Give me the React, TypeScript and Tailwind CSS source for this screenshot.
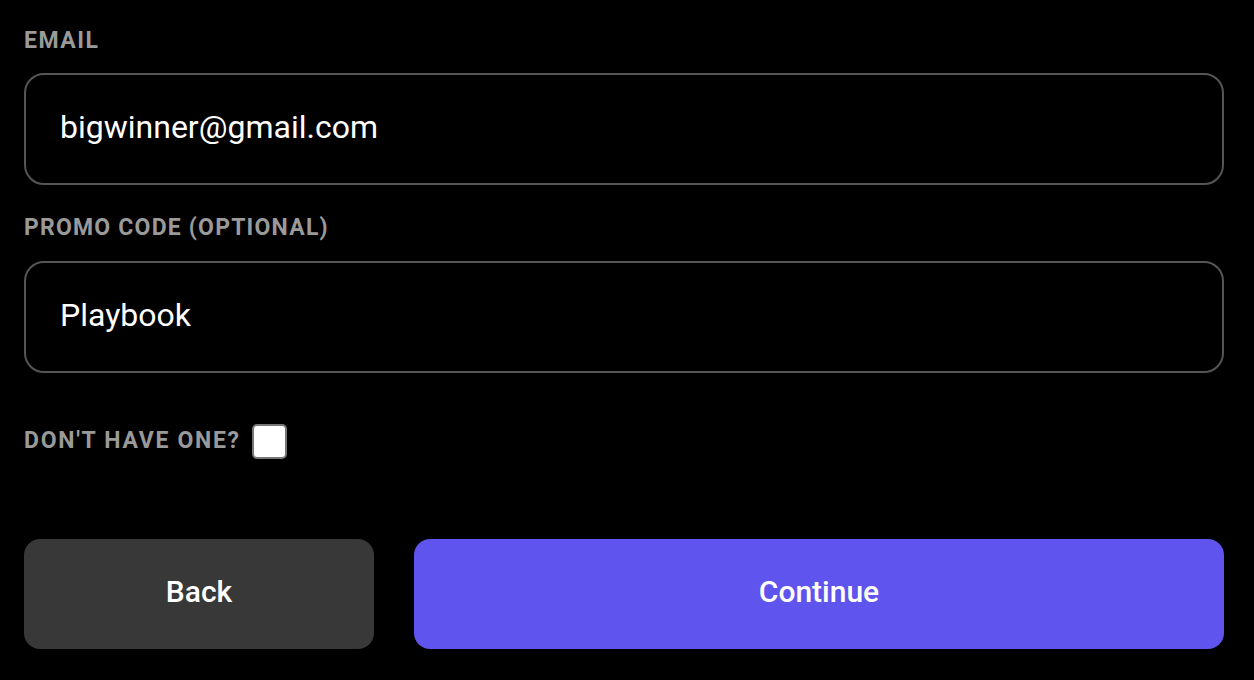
import React from "react";

export default function App() {
  const label = "text-[23px] leading-[26px] font-bold text-[#9a9a9a]";
  return (
    <div
      className="w-[1254px] h-[680px] bg-black pl-6 pr-[30px] pt-[28px] flex flex-col"
      style={{ fontFamily: "Roboto, 'Liberation Sans', sans-serif" }}
    >
      <div className={`${label} tracking-[1.5px]`}>EMAIL</div>
      <div className="mt-[19px] h-[112px] rounded-[20px] border-2 border-[#555555] flex items-center pl-[34px] pb-[4px]">
        <span className="text-[32px] text-white">bigwinner@gmail.com</span>
      </div>
      <div className={`${label} tracking-[1.2px] mt-[30px]`}>PROMO CODE (OPTIONAL)</div>
      <div className="mt-[20px] h-[112px] rounded-[20px] border-2 border-[#555555] flex items-center pl-[34px] pb-[4px]">
        <span className="text-[32px] text-white">Playbook</span>
      </div>
      <div className="mt-[50px] h-[36px] flex items-center gap-[11px]">
        <span className={`${label} tracking-[1.7px]`}>DON'T HAVE ONE?</span>
        <div className="w-[35px] h-[35px] bg-white rounded-[5px] border-2 border-[#777777]" />
      </div>
      <div className="mt-[80px] flex gap-10">
        <button className="w-[350px] h-[110px] rounded-[16px] bg-[#383838] text-white text-[30px] font-medium pb-[5px]">
          Back
        </button>
        <button className="flex-1 h-[110px] rounded-[16px] bg-[#5f54ee] text-white text-[30px] font-medium pb-[5px]">
          Continue
        </button>
      </div>
    </div>
  );
}
